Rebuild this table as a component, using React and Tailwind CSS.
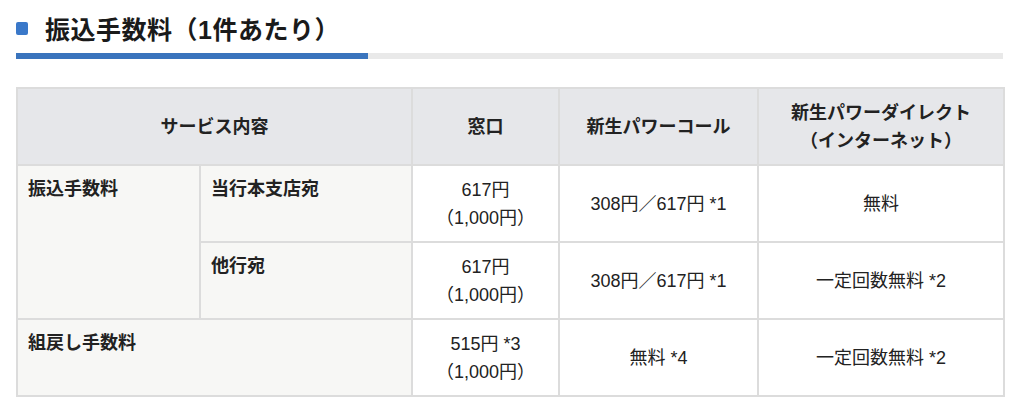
import React from 'react';

const rows = [
  { label: '振込手数料', sub: '当行本支店宛', window: ['617円', '（1,000円）'], call: '308円／617円 *1', net: '無料' },
  { label: null, sub: '他行宛', window: ['617円', '（1,000円）'], call: '308円／617円 *1', net: '一定回数無料 *2' },
];

const th = 'border-2 border-[#dcdcdc] bg-[#e6e7ea] px-[10px] py-[9px] text-center font-bold';
const td = 'border-2 border-[#dcdcdc] px-[10px] py-[9px]';
const rowHead = 'border-2 border-[#dcdcdc] bg-[#f7f7f5] px-[10px] py-[9px] text-left align-top font-bold';

const App = () => {
  return (
    <div
      className="w-[1024px] h-[417px] bg-white px-4 pt-[12px] text-[#222]"
      style={{ fontFamily: '"Liberation Sans", "Noto Sans CJK JP", sans-serif' }}
    >
      {/* Section heading */}
      <div className="w-[987px]">
        <div className="flex items-center gap-[17px] h-[36px]">
          <span className="block shrink-0 w-[12px] h-[13px] rounded-[2px] bg-[#3a78c9] -mt-[4px]" />
          <h2 className="text-[25px] font-bold leading-none tracking-[0.5px] text-[#1a1a1a]">振込手数料（1件あたり）</h2>
        </div>
        <div className="flex h-[6px] mt-[5px] bg-[#e9e9e9]">
          <div className="w-[352px] bg-[#3a74bd]" />
        </div>
      </div>

      {/* Fee table */}
      <table className="mt-[28px] w-[987px] table-fixed border-collapse text-[18px] leading-[28px]">
        <colgroup>
          <col className="w-[183px]" />
          <col className="w-[212px]" />
          <col className="w-[147px]" />
          <col className="w-[199px]" />
          <col className="w-[246px]" />
        </colgroup>
        <thead>
          <tr className="h-[77px]">
            <th colSpan={2} className={th}>サービス内容</th>
            <th className={th}>窓口</th>
            <th className={th}>新生パワーコール</th>
            <th className={th}>新生パワーダイレクト<br />（インターネット）</th>
          </tr>
        </thead>
        <tbody>
          {rows.map((r, i) => (
            <tr key={i} className="h-[77px]">
              {r.label && <th rowSpan={2} className={rowHead}>{r.label}</th>}
              <th className={rowHead}>{r.sub}</th>
              <td className={`${td} text-center`}>
                {r.window[0]}<br />{r.window[1]}
              </td>
              <td className={`${td} text-center`}>{r.call}</td>
              <td className={`${td} text-center`}>{r.net}</td>
            </tr>
          ))}
          <tr className="h-[77px]">
            <th colSpan={2} className={rowHead}>組戻し手数料</th>
            <td className={`${td} text-center`}>515円 *3<br />（1,000円）</td>
            <td className={`${td} text-center`}>無料 *4</td>
            <td className={`${td} text-center`}>一定回数無料 *2</td>
          </tr>
        </tbody>
      </table>
    </div>
  );
};

export default App;
